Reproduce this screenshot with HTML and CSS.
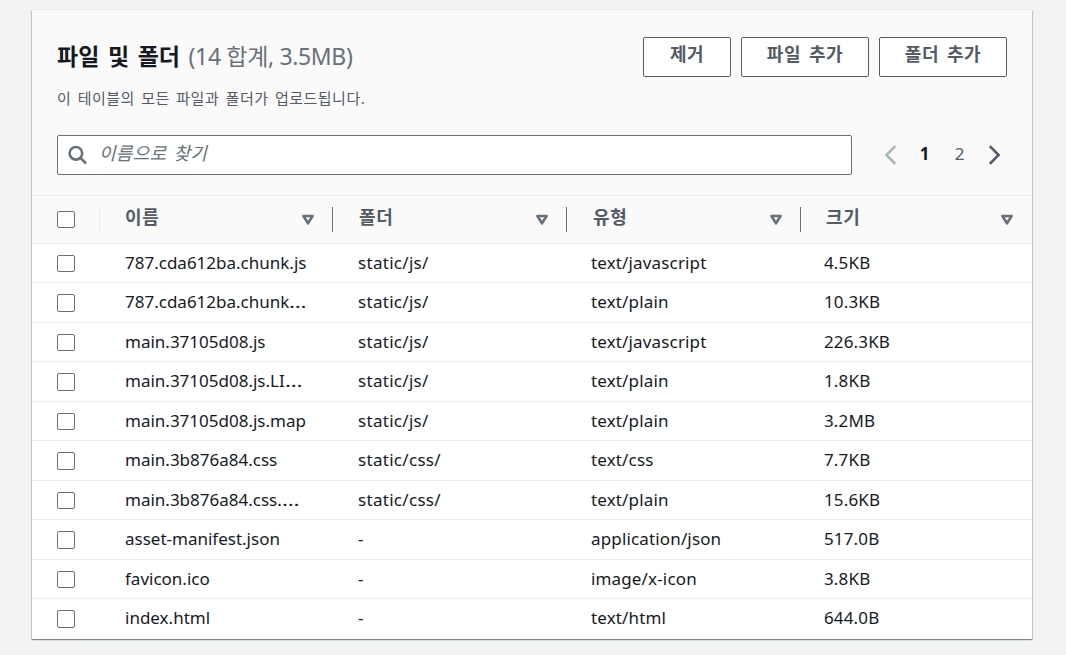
FILE: index.html
```html
<!DOCTYPE html>
<html lang="ko">
<head>
<meta charset="utf-8">
<title>파일 및 폴더</title>
<link rel="stylesheet" href="styles.css">
</head>
<body>
<svg class="defs" width="0" height="0">
  <symbol id="sort" viewBox="0 0 14 12"><path d="M2.4 2h9.2L7 9.3z" fill="none" stroke="currentColor" stroke-width="2.6" stroke-linejoin="round"/></symbol>
</svg>
<main class="card">
  <header class="top">
    <div class="heading">
      <div class="titles">
        <h1 class="title">파일 및 폴더 <span class="count">(14 합계, 3.5MB)</span></h1>
        <p class="desc">이 테이블의 모든 파일과 폴더가 업로드됩니다.</p>
      </div>
      <div class="actions">
        <button class="btn btn-short">제거</button>
        <button class="btn">파일 추가</button>
        <button class="btn">폴더 추가</button>
      </div>
    </div>
    <div class="tools">
      <div class="search">
        <svg class="search-icon" width="20" height="20" viewBox="0 0 20 20" fill="none" stroke="currentColor" stroke-width="2.6"><circle cx="7.9" cy="8.3" r="6.3"/><path d="M12.4 12.8l5.7 5.7"/></svg>
        <span class="placeholder">이름으로 찾기</span>
      </div>
      <nav class="pages">
        <svg class="prev" width="13" height="20" viewBox="0 0 13 20" fill="none" stroke="currentColor" stroke-width="2.6"><path d="M11.2 1.2L2.4 10l8.8 8.8"/></svg>
        <span class="page current">1</span>
        <span class="page">2</span>
        <svg class="next" width="13" height="20" viewBox="0 0 13 20" fill="none" stroke="currentColor" stroke-width="2.6"><path d="M1.8 1.2l8.8 8.8-8.8 8.8"/></svg>
      </nav>
    </div>
  </header>
  <div class="thead">
    <div class="hcheck"><i class="box"></i></div>
    <div class="hcell"><span class="hlabel">이름</span><svg class="sort" width="14" height="12"><use href="#sort"/></svg></div>
    <div class="hcell wide"><span class="hlabel">폴더</span><svg class="sort" width="14" height="12"><use href="#sort"/></svg></div>
    <div class="hcell wide"><span class="hlabel">유형</span><svg class="sort" width="14" height="12"><use href="#sort"/></svg></div>
    <div class="hcell last"><span class="hlabel">크기</span><svg class="sort" width="14" height="12"><use href="#sort"/></svg></div>
  </div>
  <div class="tbody">
    <div class="row"><i class="box"></i><span class="cell name">787.cda612ba.chunk.js</span><span class="cell folder">static/js/</span><span class="cell">text/javascript</span><span class="cell">4.5KB</span></div>
    <div class="row"><i class="box"></i><span class="cell name">787.cda612ba.chunk<span class="more">…</span></span><span class="cell folder">static/js/</span><span class="cell">text/plain</span><span class="cell">10.3KB</span></div>
    <div class="row"><i class="box"></i><span class="cell name">main.37105d08.js</span><span class="cell folder">static/js/</span><span class="cell">text/javascript</span><span class="cell">226.3KB</span></div>
    <div class="row"><i class="box"></i><span class="cell name">main.37105d08.js.LI<span class="more">…</span></span><span class="cell folder">static/js/</span><span class="cell">text/plain</span><span class="cell">1.8KB</span></div>
    <div class="row"><i class="box"></i><span class="cell name">main.37105d08.js.map</span><span class="cell folder">static/js/</span><span class="cell">text/plain</span><span class="cell">3.2MB</span></div>
    <div class="row"><i class="box"></i><span class="cell name">main.3b876a84.css</span><span class="cell folder">static/css/</span><span class="cell">text/css</span><span class="cell">7.7KB</span></div>
    <div class="row"><i class="box"></i><span class="cell name">main.3b876a84.css.<span class="more">…</span></span><span class="cell folder">static/css/</span><span class="cell">text/plain</span><span class="cell">15.6KB</span></div>
    <div class="row"><i class="box"></i><span class="cell name">asset-manifest.json</span><span class="cell folder">-</span><span class="cell">application/json</span><span class="cell">517.0B</span></div>
    <div class="row"><i class="box"></i><span class="cell name">favicon.ico</span><span class="cell folder">-</span><span class="cell">image/x-icon</span><span class="cell">3.8KB</span></div>
    <div class="row"><i class="box"></i><span class="cell name">index.html</span><span class="cell folder">-</span><span class="cell">text/html</span><span class="cell">644.0B</span></div>
  </div>
</main>
</body>
</html>
```
FILE: styles.css
```css
* { box-sizing: border-box; }
body {
  margin: 0;
  height: 655px;
  padding: 10px 34px 16px 32px;
  background: #f2f3f3;
  color: #16191f;
  font-family: "Noto Sans", "Noto Sans CJK KR", sans-serif;
  overflow: hidden;
}
.defs { display: block; }
.card {
  height: 629px;
  background: #fff;
  box-shadow: 0 1px 1px 0 rgba(0,28,36,.3), 1px 1px 1px 0 rgba(0,28,36,.15), -1px 1px 1px 0 rgba(0,28,36,.15), 0 -1px 0 0 #eaeded;
}
.top {
  height: 186px;
  padding: 27px 25px 0;
  background: #fafafa;
  border-bottom: 1px solid #eaeded;
}
.heading { display: flex; justify-content: space-between; height: 98px; }
.title { margin: 3px 0 0; font-size: 23px; line-height: 32px; font-weight: 700; word-spacing: 2.6px; white-space: nowrap; }
.count { font-weight: 400; letter-spacing: -.35px; word-spacing: 0; color: #687078; }
.desc { margin: 14px 0 0; font-size: 15px; line-height: 24px; color: #545b64; letter-spacing: .5px; word-spacing: 2px; white-space: nowrap; }
.actions { display: flex; gap: 10px; }
.btn {
  width: 128px; height: 40px; padding: 0 0 7px;
  border: 1px solid #545b64; border-radius: 2px; background: #fff;
  color: #545b64; font: 700 18px/31px "Noto Sans CJK KR", sans-serif;
  letter-spacing: .5px; word-spacing: 2.5px;
}
.btn-short { width: 88px; }
.tools { display: flex; justify-content: space-between; height: 40px; }
.search {
  display: flex; align-items: center; width: 795px; padding-left: 10px;
  border: 1px solid #687078; border-radius: 2px; background: #fff; color: #687078;
}
.placeholder { margin: -4px 0 0 11px; font-size: 18px; line-height: 28px; font-style: italic; letter-spacing: .3px; word-spacing: 2px; }
.search-icon { display: block; }
.pages { display: flex; align-items: center; width: 123px; color: #545b64; font-size: 17px; }
.page { width: 35px; margin-top: -3px; text-align: center; }
.pages .prev { color: #aab7b8; margin-right: 10px; }
.pages .next { margin-left: 11px; }
.current { color: #16191f; font-weight: 700; }
.thead {
  display: grid; grid-template-columns: 68px 233px 234px 234px 231px;
  align-items: center; height: 48px; background: #fafafa; border-bottom: 1px solid #eaeded;
}
.hcheck, .hcell { display: flex; align-items: center; height: 25px; border-right: 1px solid #687078; }
.hcheck { border-color: #eaeded; }
.hcell { justify-content: space-between; padding: 0 17px 0 25px; color: #545b64; }
.wide { padding-left: 26px; }
.last { border: 0; padding-right: 18px; }
.hlabel { margin-top: -5px; font-size: 18px; line-height: 26px; font-weight: 700; letter-spacing: .6px; }
.sort { color: #687078; }
.box { display: block; width: 18px; height: 17px; margin-left: 25px; border: 1px solid #687078; border-radius: 2px; background: #fff; }
.row {
  display: grid; grid-template-columns: 68px 233px 233px 233px 233px;
  align-items: center; height: 39px; border-bottom: 1px solid #eaeded;
}
.row .box { margin-top: 1px; }
.row:nth-child(even) { height: 40px; padding-bottom: 1px; }
.row:nth-child(even) .box { height: 18px; margin-top: 2px; }
.row:last-child { border-bottom: 0; padding-bottom: 2px; }
.cell { padding-left: 25px; font-size: 17px; line-height: 24px; letter-spacing: .15px; white-space: nowrap; }
.name { letter-spacing: 0; }
.folder { letter-spacing: .3px; }
.more { display: inline-block; transform: scaleX(1.3); transform-origin: left; }
```
